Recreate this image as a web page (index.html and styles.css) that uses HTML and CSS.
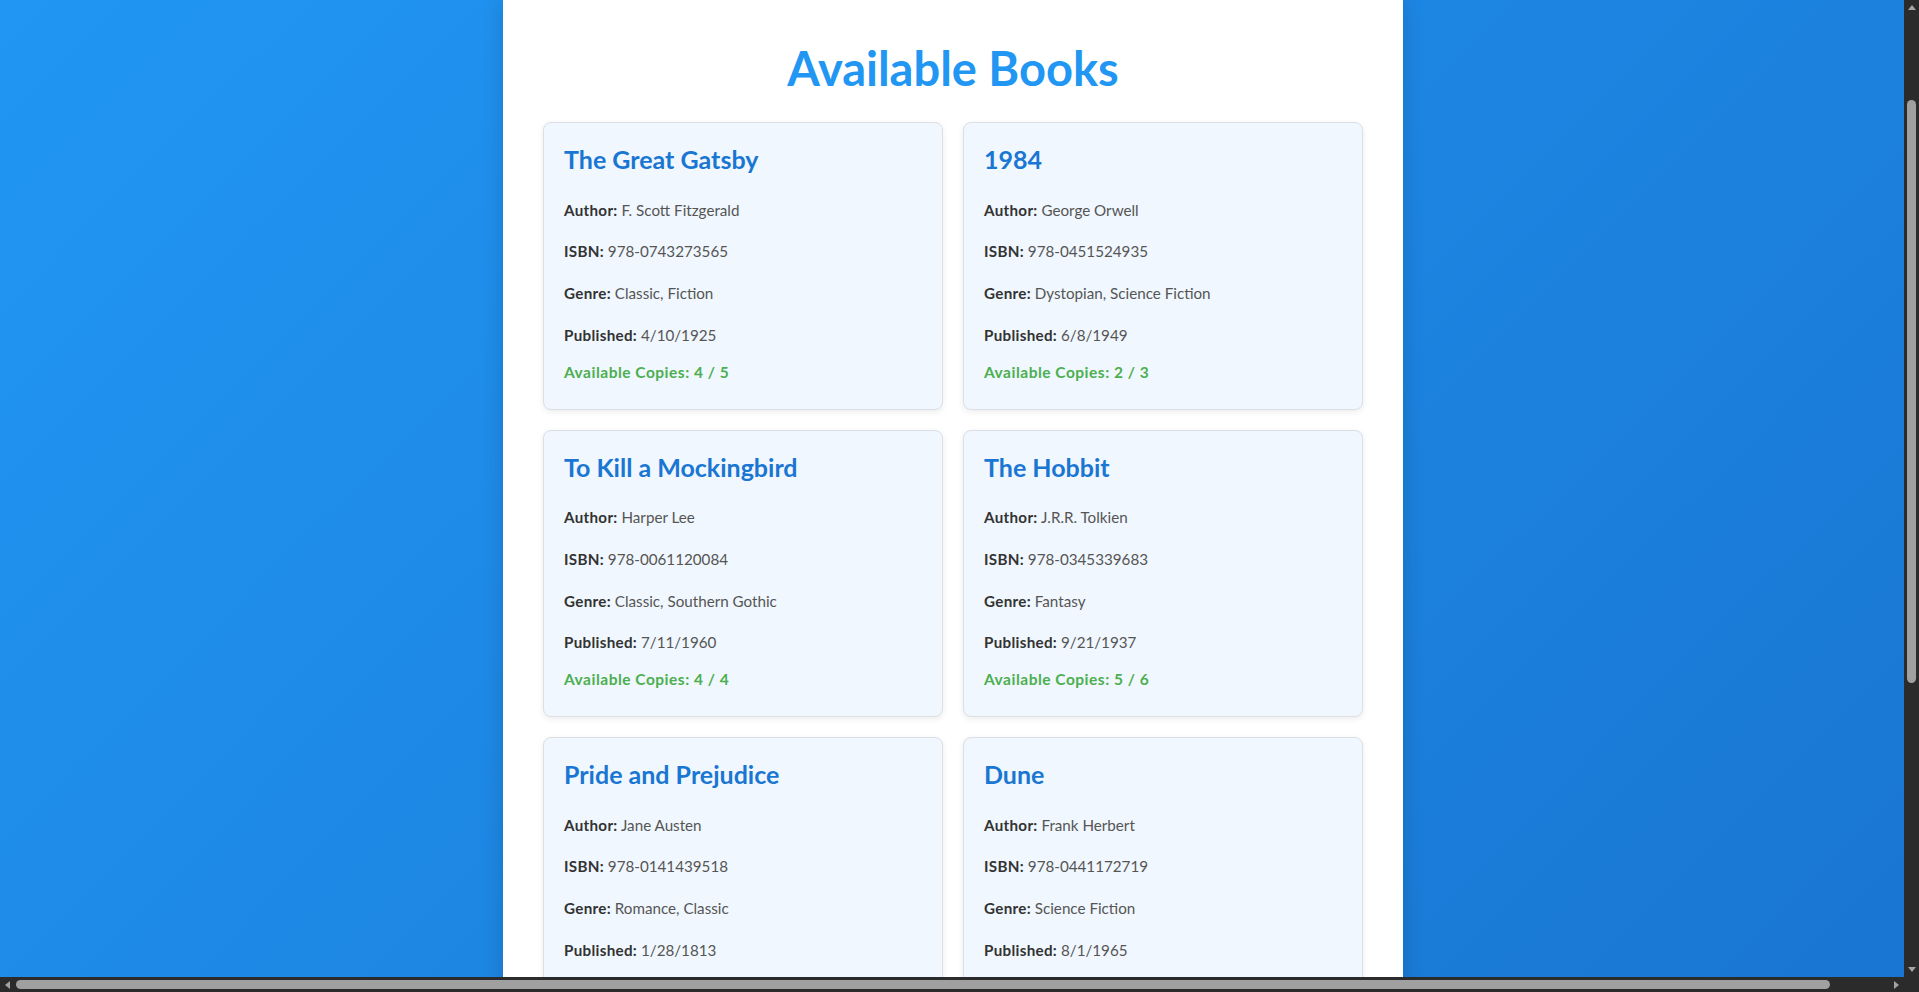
FILE: index.html
```html
<!DOCTYPE html>
<html lang="en">
<head>
<meta charset="utf-8">
<title>Available Books</title>
<link rel="stylesheet" href="styles.css">
</head>
<body>
<div class="window">
  <div class="viewport">
    <main class="container">
      <h1 class="page-title">Available Books</h1>
      <div class="grid">
        <article class="card">
          <h3 class="card-title">The Great Gatsby</h3>
          <div class="details">
            <p><strong>Author:</strong> F. Scott Fitzgerald</p>
            <p><strong>ISBN:</strong> 978-0743273565</p>
            <p><strong>Genre:</strong> Classic, Fiction</p>
            <p><strong>Published:</strong> 4/10/1925</p>
          </div>
          <p class="avail">Available Copies: 4 / 5</p>
        </article>
        <article class="card">
          <h3 class="card-title">1984</h3>
          <div class="details">
            <p><strong>Author:</strong> George Orwell</p>
            <p><strong>ISBN:</strong> 978-0451524935</p>
            <p><strong>Genre:</strong> Dystopian, Science Fiction</p>
            <p><strong>Published:</strong> 6/8/1949</p>
          </div>
          <p class="avail">Available Copies: 2 / 3</p>
        </article>
        <article class="card">
          <h3 class="card-title">To Kill a Mockingbird</h3>
          <div class="details">
            <p><strong>Author:</strong> Harper Lee</p>
            <p><strong>ISBN:</strong> 978-0061120084</p>
            <p><strong>Genre:</strong> Classic, Southern Gothic</p>
            <p><strong>Published:</strong> 7/11/1960</p>
          </div>
          <p class="avail">Available Copies: 4 / 4</p>
        </article>
        <article class="card">
          <h3 class="card-title">The Hobbit</h3>
          <div class="details">
            <p><strong>Author:</strong> J.R.R. Tolkien</p>
            <p><strong>ISBN:</strong> 978-0345339683</p>
            <p><strong>Genre:</strong> Fantasy</p>
            <p><strong>Published:</strong> 9/21/1937</p>
          </div>
          <p class="avail">Available Copies: 5 / 6</p>
        </article>
        <article class="card">
          <h3 class="card-title">Pride and Prejudice</h3>
          <div class="details">
            <p><strong>Author:</strong> Jane Austen</p>
            <p><strong>ISBN:</strong> 978-0141439518</p>
            <p><strong>Genre:</strong> Romance, Classic</p>
            <p><strong>Published:</strong> 1/28/1813</p>
          </div>
          <p class="avail">Available Copies: 3 / 3</p>
        </article>
        <article class="card">
          <h3 class="card-title">Dune</h3>
          <div class="details">
            <p><strong>Author:</strong> Frank Herbert</p>
            <p><strong>ISBN:</strong> 978-0441172719</p>
            <p><strong>Genre:</strong> Science Fiction</p>
            <p><strong>Published:</strong> 8/1/1965</p>
          </div>
          <p class="avail">Available Copies: 2 / 4</p>
        </article>
      </div>
    </main>
  </div>
  <div class="vbar">
    <span class="btn"><span class="tri tri-up"></span></span>
    <div class="vtrack"><div class="vthumb"></div></div>
    <span class="btn"><span class="tri tri-down"></span></span>
  </div>
  <div class="hbar">
    <span class="btn"><span class="tri tri-left"></span></span>
    <div class="htrack"><div class="hthumb"></div></div>
    <span class="btn"><span class="tri tri-right"></span></span>
  </div>
  <div class="corner"></div>
</div>
</body>
</html>
```

FILE: styles.css
```css
html, body {
  margin: 0;
  height: 100%;
  overflow: hidden;
}

body {
  font-family: Lato, "Open Sans", sans-serif;
  color: #333;
}

.window {
  display: grid;
  grid-template-columns: 1fr 15px;
  grid-template-rows: 1fr 15px;
  height: 100vh;
}

.viewport {
  overflow: hidden;
  background: linear-gradient(135deg, #2196F3 0%, #1976D2 100%);
  display: flex;
  justify-content: center;
  align-items: flex-start;
  padding-left: 2px;
}

.container {
  flex: none;
  width: 900px;
  box-sizing: border-box;
  background: #fff;
  padding: 0 40px 40px;
  box-shadow: 0 0 20px rgba(0, 0, 0, 0.15);
}

.page-title {
  margin: 41px 0 26px;
  font-size: 47px;
  line-height: 55px;
  font-weight: 700;
  text-align: center;
  color: #2196F3;
}

.grid {
  display: grid;
  grid-template-columns: 1fr 1fr;
  gap: 20px;
}

.card {
  background: #f0f7fe;
  border: 1px solid #dcdfe3;
  border-radius: 8px;
  padding: 20px;
  box-shadow: 0 2px 6px rgba(0, 0, 0, 0.08);
}

.card-title {
  margin: 0 0 24.5px;
  font-size: 25px;
  line-height: 32px;
  font-weight: 700;
  color: #1976D2;
}

.details {
  display: flex;
  flex-direction: column;
  gap: 20px;
}

.details p {
  margin: 0;
  font-size: 15.2px;
  line-height: 21.75px;
  color: #555;
}

.details strong {
  color: #333;
  font-weight: 700;
  letter-spacing: 0.3px;
}

.avail {
  margin: 15.25px 0 5px;
  font-size: 15.5px;
  line-height: 21.75px;
  font-weight: 700;
  letter-spacing: 0.5px;
  color: #4CAF50;
}

/* scrollbars */
.vbar, .hbar, .corner {
  background: #2b2b2b;
}

.vbar {
  display: flex;
  flex-direction: column;
  min-height: 0;
}

.hbar {
  display: flex;
  min-width: 0;
}

.btn {
  flex: none;
  width: 15px;
  height: 15px;
  display: flex;
  align-items: center;
  justify-content: center;
}

.vtrack {
  flex: 1;
  display: flex;
  flex-direction: column;
  align-items: center;
  padding-top: 85px;
}

.vthumb {
  width: 9px;
  height: 583px;
  border-radius: 5px;
  background: #a0a0a0;
}

.htrack {
  flex: 1;
  display: flex;
  align-items: center;
  padding-left: 1px;
}

.hthumb {
  height: 9px;
  width: 1814px;
  border-radius: 5px;
  background: #a0a0a0;
}

.tri {
  width: 0;
  height: 0;
}

.tri-up {
  border-left: 4px solid transparent;
  border-right: 4px solid transparent;
  border-bottom: 5px solid #a3a3a3;
}

.tri-down {
  border-left: 4px solid transparent;
  border-right: 4px solid transparent;
  border-top: 5px solid #a3a3a3;
}

.tri-left {
  border-top: 4px solid transparent;
  border-bottom: 4px solid transparent;
  border-right: 5px solid #a3a3a3;
}

.tri-right {
  border-top: 4px solid transparent;
  border-bottom: 4px solid transparent;
  border-left: 5px solid #a3a3a3;
}
```
